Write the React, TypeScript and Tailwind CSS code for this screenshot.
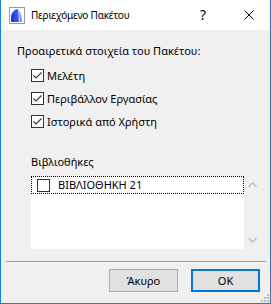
const font = { fontFamily: '"Noto Sans", "Liberation Sans", sans-serif' };

function CheckBox({ checked }: { checked: boolean }) {
  return (
    <span className="w-[13px] h-[13px] border border-[#333333] bg-white flex items-center justify-center shrink-0">
      {checked && (
        <svg width="11" height="11" viewBox="0 0 11 11">
          <polyline points="1.5,5.5 4,8 9.5,2.5" fill="none" stroke="#333333" strokeWidth="1.1" />
        </svg>
      )}
    </span>
  );
}

function AppIcon() {
  return (
    <svg width="16" height="17" viewBox="0 0 16 17">
      <defs>
        <linearGradient id="ag" x1="0" y1="0" x2="1" y2="0">
          <stop offset="0" stopColor="#1a2fd8" />
          <stop offset="0.6" stopColor="#3b5cf5" />
          <stop offset="1" stopColor="#9fb4ff" />
        </linearGradient>
      </defs>
      <rect x="0.5" y="0.5" width="15" height="16" fill="#ffffff" stroke="#9a9a9a" />
      <path d="M2 15 L2 9 C3 5 6 2 9 2 C11 4 12.5 9 13.5 15 Z" fill="url(#ag)" />
      <path d="M9 2 C10 6 10.5 11 10.5 15" fill="none" stroke="#ffffff" strokeWidth="0.8" />
    </svg>
  );
}

const options = ['Μελέτη', 'Περιβάλλον Εργασίας', 'Ιστορικά από Χρήστη'];

export default function App() {
  return (
    <div
      className="w-[271px] h-[304px] flex flex-col border-x border-b border-[#1b7fd6] bg-[#f0f0f0] text-[11px] text-black overflow-hidden"
      style={font}
    >
      {/* Title bar */}
      <div className="h-[30px] bg-white flex items-center shrink-0">
        <div className="ml-[8px] mt-[1px]">
          <AppIcon />
        </div>
        <span className="ml-[6px] leading-4 text-[10px] tracking-[-0.2px]">Περιεχόμενο Πακέτου</span>
        <span className="ml-auto text-[14px] leading-4">?</span>
        <svg className="ml-[38px] mr-[16px]" width="10" height="10" viewBox="0 0 10 10">
          <path d="M0.5 0.5 L9.5 9.5 M9.5 0.5 L0.5 9.5" stroke="#000" strokeWidth="1" />
        </svg>
      </div>

      {/* Body */}
      <div className="flex-1 flex flex-col">
        <div className="mt-[13px] ml-[16px] h-4 leading-4">Προαιρετικά στοιχεία του Πακέτου:</div>

        <div className="mt-[5px] ml-[30px] flex flex-col">
          {options.map((o) => (
            <div key={o} className="h-[23px] flex items-center gap-[3px]">
              <CheckBox checked />
              <span className="leading-4">{o}</span>
            </div>
          ))}
        </div>

        <div className="mt-[21px] ml-[30px] h-4 leading-4">Βιβλιοθήκες</div>

        {/* Library list */}
        <div className="mt-[6px] ml-[30px] flex h-[73px]">
          <div className="w-[213px] bg-white">
            <div className="h-[18px] border border-dotted border-black flex items-center pl-[5px] gap-[8px]">
              <CheckBox checked={false} />
              <span className="leading-4">ΒΙΒΛΙΟΘΗΚΗ 21</span>
            </div>
          </div>
          <div className="w-[17px] flex flex-col items-center justify-between py-[6px]">
            <svg width="9" height="6" viewBox="0 0 9 6">
              <polyline points="0.5,5 4.5,1 8.5,5" fill="none" stroke="#c2c2c2" strokeWidth="1.6" />
            </svg>
            <svg width="9" height="6" viewBox="0 0 9 6">
              <polyline points="0.5,1 4.5,5 8.5,1" fill="none" stroke="#c2c2c2" strokeWidth="1.6" />
            </svg>
          </div>
        </div>

        <div className="mt-[12px] ml-[5px] w-[260px] h-px bg-[#a0a0a0]" />

        {/* Buttons */}
        <div className="mt-[7px] flex justify-end gap-[13px] mr-[10px]">
          <button className="w-[69px] h-[23px] bg-[#e1e1e1] border border-[#adadad] leading-4">Άκυρο</button>
          <button className="w-[69px] h-[23px] bg-[#e1e1e1] border-2 border-[#0078d7] leading-4">OK</button>
        </div>

        <div className="mt-auto flex justify-end mr-[1px] mb-[1px]">
          <svg width="8" height="8" viewBox="0 0 8 8">
            <rect x="6" y="0" width="2" height="2" fill="#bcbcbc" />
            <rect x="3" y="3" width="2" height="2" fill="#bcbcbc" />
            <rect x="6" y="3" width="2" height="2" fill="#bcbcbc" />
            <rect x="0" y="6" width="2" height="2" fill="#bcbcbc" />
            <rect x="3" y="6" width="2" height="2" fill="#bcbcbc" />
            <rect x="6" y="6" width="2" height="2" fill="#bcbcbc" />
          </svg>
        </div>
      </div>
    </div>
  );
}
